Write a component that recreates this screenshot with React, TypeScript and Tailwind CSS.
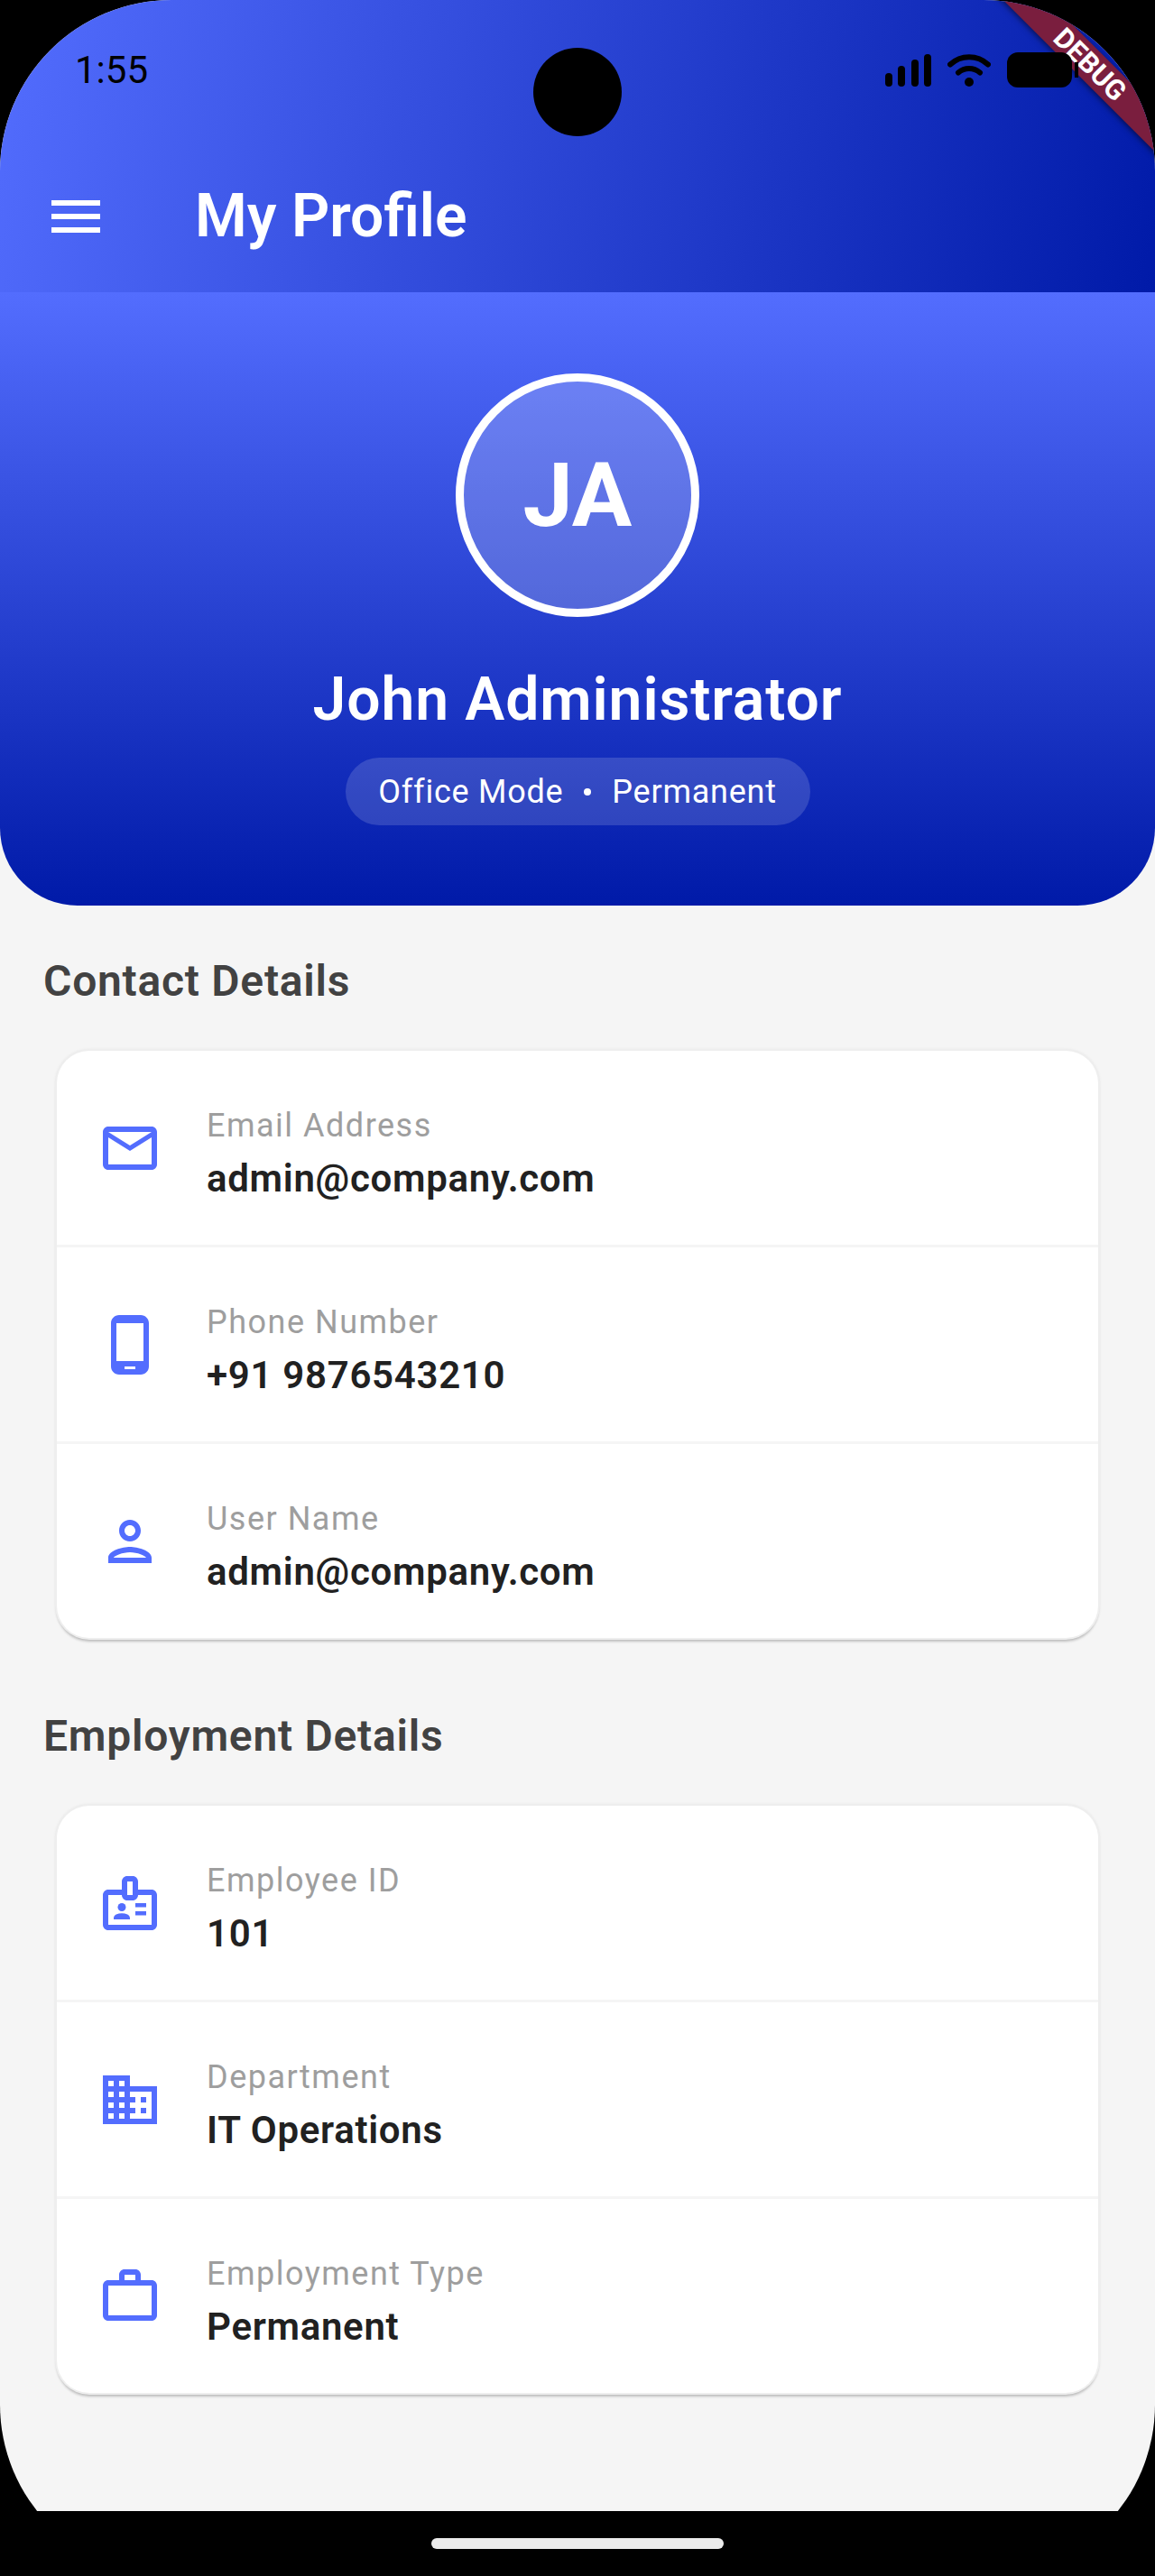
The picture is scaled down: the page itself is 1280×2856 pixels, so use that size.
import type { ReactNode } from 'react';
import {
  MdMenu,
  MdOutlineEmail,
  MdOutlinePhoneAndroid,
  MdOutlinePerson,
  MdOutlineBadge,
  MdOutlineBusiness,
  MdOutlineWorkOutline,
} from 'react-icons/md';

interface InfoItem {
  icon: ReactNode;
  label: string;
  value: string;
}

const contactItems: InfoItem[] = [
  { icon: <MdOutlineEmail size={72} />, label: 'Email Address', value: 'admin@company.com' },
  { icon: <MdOutlinePhoneAndroid size={72} />, label: 'Phone Number', value: '+91 9876543210' },
  { icon: <MdOutlinePerson size={72} />, label: 'User Name', value: 'admin@company.com' },
];

const employmentItems: InfoItem[] = [
  { icon: <MdOutlineBadge size={72} />, label: 'Employee ID', value: '101' },
  { icon: <MdOutlineBusiness size={72} />, label: 'Department', value: 'IT Operations' },
  { icon: <MdOutlineWorkOutline size={72} />, label: 'Employment Type', value: 'Permanent' },
];

const SignalIcon = () => (
  <svg width="51" height="36" viewBox="0 0 51 36" fill="black">
    <rect x="0" y="21" width="8" height="15" rx="4" />
    <rect x="14" y="13" width="8" height="23" rx="4" />
    <rect x="29" y="6" width="8" height="30" rx="4" />
    <rect x="43" y="0" width="8" height="36" rx="4" />
  </svg>
);

const WifiIcon = () => (
  <svg width="48" height="36" viewBox="0 0 48 36" fill="none" stroke="black" strokeWidth="6" strokeLinecap="round">
    <path d="M3 11.5C15 0.5 33 0.5 45 11.5" />
    <path d="M12 20.5C19 14.5 29 14.5 36 20.5" />
    <circle cx="24" cy="31" r="5" fill="black" stroke="none" />
  </svg>
);

const InfoCard = ({ items }: { items: InfoItem[] }) => (
  <div className="mx-[63px] rounded-[36px] bg-white shadow-[0_0_0_2px_#eeeeee,0_4px_3px_rgba(0,0,0,0.22),0_0_4px_rgba(0,0,0,0.15)]">
    {items.map((item, i) => (
      <div key={item.label}>
        {i > 0 && <div className="h-[3px] bg-[#f5f5f5]" />}
        <div className="flex h-[215px] items-center pl-[45px]">
          <div className="text-[#536dfe]">{item.icon}</div>
          <div className="ml-[49px] pt-[12px]">
            <div className="text-[36px] leading-[44px] tracking-[1.5px] text-[#9e9e9e]">{item.label}</div>
            <div className="mt-[12px] text-[42px] leading-[50px] font-semibold tracking-[0.7px] text-[#212121]">
              {item.value}
            </div>
          </div>
        </div>
      </div>
    ))}
  </div>
);

const SectionTitle = ({ children, className }: { children: ReactNode; className: string }) => (
  <h2 className={`ml-[48px] text-[48px] leading-[56px] font-semibold tracking-[0.75px] text-[#424242] ${className}`}>
    {children}
  </h2>
);

const App = () => {
  return (
    <div className="relative h-[2856px] w-[1280px] overflow-hidden bg-black font-[Roboto,sans-serif]">
      <div className="relative h-full overflow-hidden rounded-[190px] bg-[#f5f5f5]">
        {/* App bar */}
        <header className="h-[324px] bg-[linear-gradient(104deg,#536dfe,#001aa8)]">
          <div className="relative z-10 flex h-[204px] items-start justify-between pt-[53px] pr-[85px] pl-[83px]">
            <span className="text-[42px] leading-[50px] text-black">1:55</span>
            <div className="mt-[5px] flex items-center">
              <SignalIcon />
              <div className="ml-[18px]">
                <WifiIcon />
              </div>
              <div className="ml-[18px] h-[39px] w-[72px] rounded-[12px] bg-black" />
              <div className="ml-[3px] h-[17px] w-[4px] bg-black" />
            </div>
          </div>
          <div className="flex h-[72px] items-center pl-[48px] text-white">
            <MdMenu size={72} />
            <h1 className="ml-[96px] text-[66px] leading-[72px] font-semibold">My Profile</h1>
          </div>
        </header>

        {/* Profile hero */}
        <section className="flex h-[680px] flex-col items-center rounded-b-[86px] bg-[linear-gradient(180deg,#536dfe,#001aa8)] pt-[90px]">
          <div className="flex h-[270px] w-[270px] items-center justify-center rounded-full border-[9px] border-white bg-white/20">
            <span className="text-[99px] leading-none font-bold text-white">JA</span>
          </div>
          <div className="mt-[53px] text-[66px] leading-[78px] font-semibold tracking-[0.9px] text-white">
            John Administrator
          </div>
          <div className="mt-[25px] flex h-[75px] w-[515px] items-center justify-center rounded-full bg-white/15 text-[36px] tracking-[0.75px] text-white">
            <span>Office Mode</span>
            <span className="mx-[23px] h-[8px] w-[8px] rounded-full bg-white" />
            <span>Permanent</span>
          </div>
        </section>

        <SectionTitle className="mt-[56px] mb-[49px]">Contact Details</SectionTitle>
        <InfoCard items={contactItems} />

        <SectionTitle className="mt-[81px] mb-[49px]">Employment Details</SectionTitle>
        <InfoCard items={employmentItems} />

        {/* Debug ribbon */}
        <div className="absolute top-[54px] left-[1008px] flex h-[35px] w-[400px] rotate-45 items-center justify-center bg-[#7a1e3e] text-[31px] leading-none font-bold text-white shadow-[0_2px_6px_rgba(0,0,0,0.5)]">
          DEBUG
        </div>
      </div>

      {/* Camera cutout */}
      <div className="absolute top-[53px] left-[591px] h-[98px] w-[98px] rounded-full bg-black" />

      {/* Navigation bar */}
      <div className="absolute right-0 bottom-0 left-0 flex h-[72px] items-start justify-center bg-black pt-[30px]">
        <div className="h-[12px] w-[324px] rounded-full bg-[#ebebeb]" />
      </div>
    </div>
  );
};

export default App;
